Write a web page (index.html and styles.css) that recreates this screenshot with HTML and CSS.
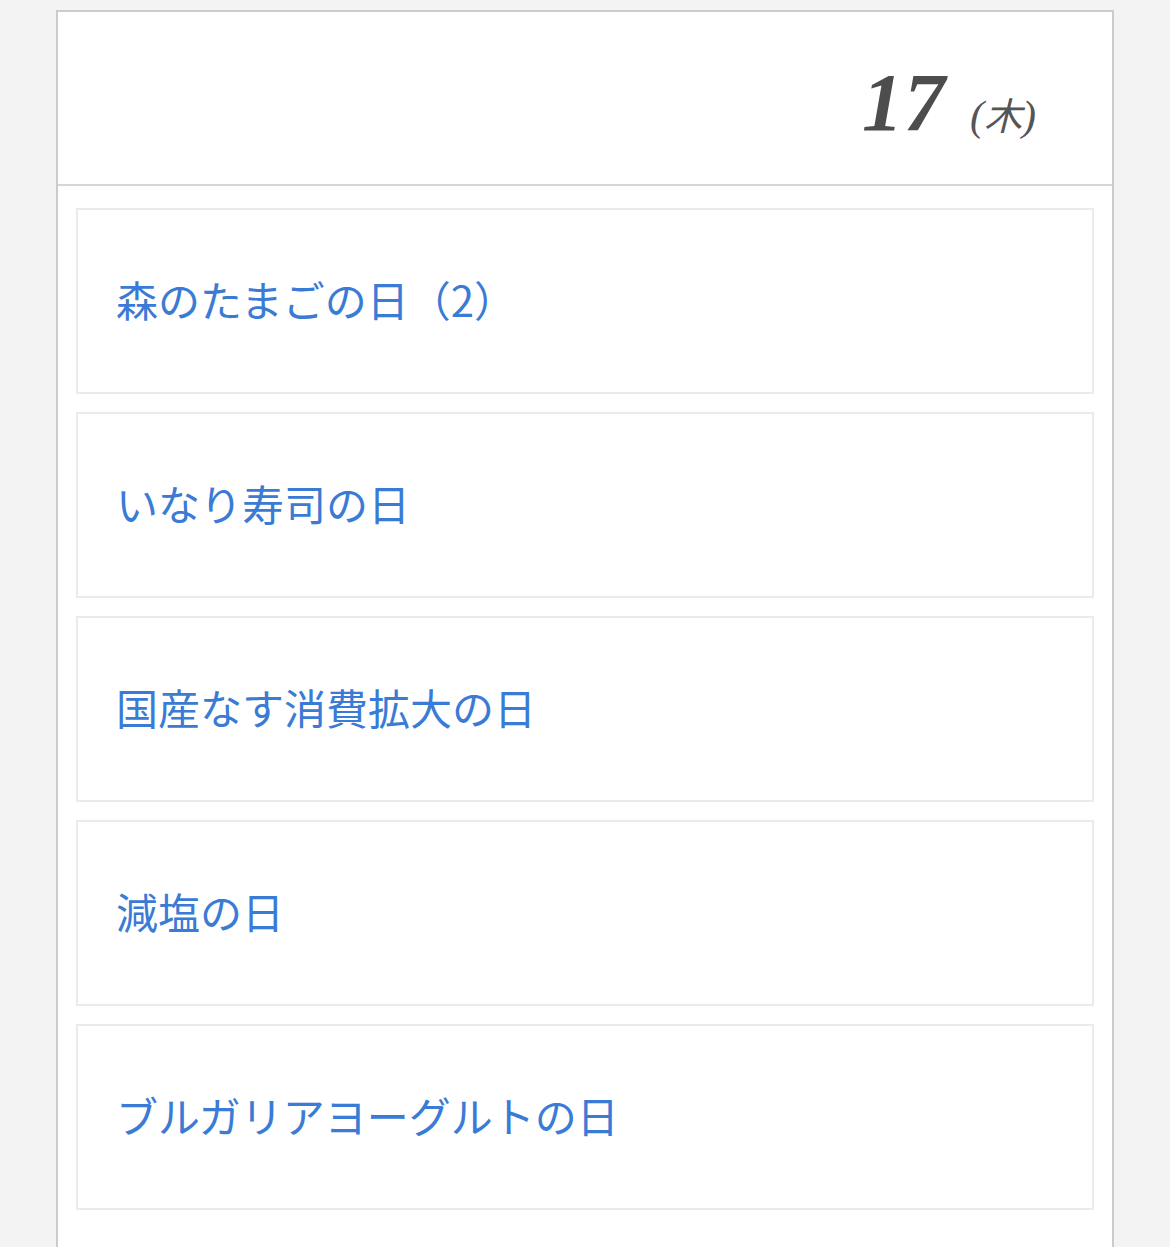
FILE: index.html
```html
<!DOCTYPE html>
<html lang="ja">
  <head>
    <meta charset="utf-8">
    <title>17日の記念日</title>
    <link rel="stylesheet" href="styles.css">
  </head>
  <body>
    <div id="day">
      <div class="day-head">
        <span class="day-num">17</span>
        <span class="day-week"><i>(</i>木<i>)</i></span>
      </div>
      <ul class="events">
        <li><a href="#">森のたまごの日（2）</a></li>
        <li><a href="#">いなり寿司の日</a></li>
        <li><a href="#">国産なす消費拡大の日</a></li>
        <li><a href="#">減塩の日</a></li>
        <li><a href="#">ブルガリアヨーグルトの日</a></li>
      </ul>
    </div>
  </body>
</html>
```

FILE: styles.css
```css
body {
  margin: 0;
  padding: 10px 0 0 0;
  background: #f3f3f3;
  font-family: "Noto Sans CJK JP", "Noto Sans", sans-serif;
}
#day {
  width: 1058px;
  min-height: 1300px;
  margin: 0 0 0 56px;
  box-sizing: border-box;
  border: 2px solid #cbcbcb;
  border-bottom: none;
  background: #fff;
}
.day-head {
  height: 174px;
  box-sizing: border-box;
  border-bottom: 2px solid #d6d6d6;
  display: flex;
  justify-content: flex-end;
  align-items: baseline;
  padding: 50px 76px 0 0;
  line-height: 1;
}
.day-num {
  font-family: "Liberation Serif", serif;
  font-style: italic;
  font-weight: bold;
  font-size: 82px;
  color: #4d4d4d;
  letter-spacing: 1px;
}
.day-week {
  margin-left: 24px;
  font-size: 38px;
  color: #555;
  font-style: italic;
}
.day-week i {
  font-family: "Liberation Serif", serif;
  font-size: 42px;
  font-weight: normal;
}
ul.events {
  list-style: none;
  margin: 0;
  padding: 22px 18px 0 18px;
}
ul.events li {
  height: 186px;
  box-sizing: border-box;
  border: 2px solid #ebebeb;
  margin-bottom: 18px;
  display: flex;
  align-items: center;
  padding: 0 0 4px 38px;
}
ul.events a {
  color: #3a7bd5;
  text-decoration: none;
  font-size: 42px;
  line-height: 1;
}
```
